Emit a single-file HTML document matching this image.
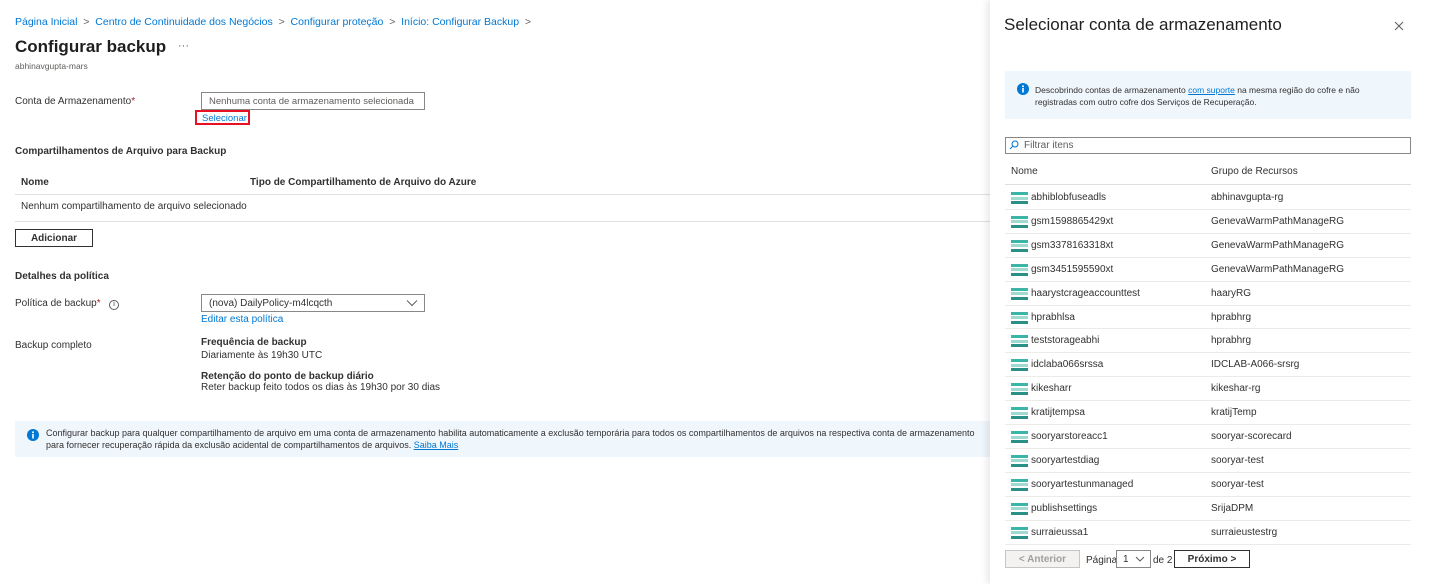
<!DOCTYPE html>
<html><head><meta charset="utf-8"><style>
*{box-sizing:border-box;margin:0;padding:0}
body{width:1429px;height:584px;overflow:hidden;background:#fff;font-family:"Liberation Sans",sans-serif;color:#323130;font-size:10px;position:relative}
.a{position:absolute;white-space:nowrap}
.link{color:#0078d4}
.b{font-weight:bold}
.line{position:absolute;height:1px;background:#e1dfdd}
.ico{position:absolute;width:17px;height:12px;background:#fff}
.ico i{position:absolute;left:0;width:17px;height:3px;background:#3bb5a8}
</style></head><body>
<div class="a link" style="left:15px;top:16px;font-size:10.5px">Página Inicial &nbsp;<span style="color:#605e5c">&gt;</span>&nbsp; Centro de Continuidade dos Negócios &nbsp;<span style="color:#605e5c">&gt;</span>&nbsp; Configurar proteção &nbsp;<span style="color:#605e5c">&gt;</span>&nbsp; Início: Configurar Backup &nbsp;<span style="color:#605e5c">&gt;</span></div>
<div class="a" style="left:15px;top:37px;font-size:17px;font-weight:bold;color:#201f1e">Configurar backup</div>
<div class="a" style="left:178px;top:40px;font-size:11px;color:#605e5c">···</div>
<div class="a" style="left:15px;top:61px;font-size:8.5px;color:#605e5c">abhinavgupta-mars</div>
<div class="a" style="left:15px;top:96px">Conta de Armazenamento<span style="color:#a4262c">*</span></div>
<div class="a" style="left:201px;top:92px;width:224px;height:18px;border:1px solid #8a8886;color:#605e5c;padding:3px 0 0 7px;font-size:9.5px;overflow:hidden">Nenhuma conta de armazenamento selecionada</div>
<div class="a link" style="left:195px;top:110px;width:55px;height:15px;border:2px solid #e81123;padding:1px 0 0 5px;font-size:9.5px">Selecionar</div>
<div class="a b" style="left:15px;top:146px">Compartilhamentos de Arquivo para Backup</div>
<div class="a b" style="left:21px;top:177px;font-weight:bold">Nome</div>
<div class="a b" style="left:250px;top:177px">Tipo de Compartilhamento de Arquivo do Azure</div>
<div class="line" style="left:15px;top:194px;width:975px"></div>
<div class="a" style="left:21px;top:201px">Nenhum compartilhamento de arquivo selecionado</div>
<div class="line" style="left:15px;top:221px;width:975px"></div>
<div class="a b" style="left:15px;top:229px;width:78px;height:18px;border:1px solid #323130;text-align:center;padding-top:3px">Adicionar</div>
<div class="a b" style="left:15px;top:271px">Detalhes da política</div>
<div class="a" style="left:15px;top:298px">Política de backup<span style="color:#a4262c">*</span> &nbsp; <span style="display:inline-block;width:10px;height:10px;border:1px solid #605e5c;border-radius:50%;font-size:7px;text-align:center;line-height:8px">i</span></div>
<div class="a" style="left:201px;top:294px;width:224px;height:18px;border:1px solid #8a8886;padding:3px 0 0 7px">(nova) DailyPolicy-m4lcqcth
<svg style="position:absolute;right:6px;top:4px" width="12" height="8"><path d="M1 1.5l5 5 5-5" fill="none" stroke="#605e5c"/></svg></div>
<div class="a link" style="left:201px;top:314px">Editar esta política</div>
<div class="a" style="left:15px;top:340px">Backup completo</div>
<div class="a b" style="left:201px;top:337px">Frequência de backup</div>
<div class="a" style="left:201px;top:350px">Diariamente às 19h30 UTC</div>
<div class="a b" style="left:201px;top:371px">Retenção do ponto de backup diário</div>
<div class="a" style="left:201px;top:382px">Reter backup feito todos os dias às 19h30 por 30 dias</div>
<div class="a" style="left:15px;top:421px;width:975px;height:36px;background:#eff6fc"></div>
<svg class="a" style="left:27px;top:429px" width="12" height="12"><circle cx="6" cy="6" r="6" fill="#0078d4"/><rect x="5.2" y="5" width="1.6" height="4.5" fill="#fff"/><circle cx="6" cy="3.3" r="1" fill="#fff"/></svg>
<div class="a" style="left:46px;top:427px;font-size:9px;line-height:12px">Configurar backup para qualquer compartilhamento de arquivo em uma conta de armazenamento habilita automaticamente a exclusão temporária para todos os compartilhamentos de arquivos na respectiva conta de armazenamento<br>para fornecer recuperação rápida da exclusão acidental de compartilhamentos de arquivos. <span class="link" style="text-decoration:underline">Saiba Mais</span></div>

<div class="a" style="left:990px;top:0;width:439px;height:584px;background:#fff;box-shadow:-4px 0 6px rgba(0,0,0,0.08)"></div>
<div class="a" style="left:1004px;top:15px;font-size:17px;color:#201f1e">Selecionar conta de armazenamento</div>
<svg class="a" style="left:1394px;top:21px" width="10" height="10"><path d="M1 1l8 8M9 1l-8 8" stroke="#605e5c" stroke-width="1"/></svg>
<div class="a" style="left:1005px;top:71px;width:406px;height:48px;background:#eff6fc"></div>
<svg class="a" style="left:1017px;top:83px" width="12" height="12"><circle cx="6" cy="6" r="6" fill="#0078d4"/><rect x="5.2" y="5" width="1.6" height="4.5" fill="#fff"/><circle cx="6" cy="3.3" r="1" fill="#fff"/></svg>
<div class="a" style="left:1035px;top:84px;font-size:8.5px;line-height:12px">Descobrindo contas de armazenamento <span class="link" style="text-decoration:underline">com suporte</span> na mesma região do cofre e não<br>registradas com outro cofre dos Serviços de Recuperação.</div>
<div class="a" style="left:1005px;top:137px;width:406px;height:17px;border:1px solid #8a8886;padding:2px 0 0 18px;color:#605e5c">Filtrar itens</div>
<svg class="a" style="left:1009px;top:140px" width="10" height="10"><circle cx="6" cy="4" r="3" fill="none" stroke="#0078d4"/><path d="M4 6L1 9" stroke="#0078d4"/></svg>
<div class="a" style="left:1011px;top:166px">Nome</div>
<div class="a" style="left:1211px;top:166px">Grupo de Recursos</div>
<div class="line" style="left:1005px;top:184px;width:406px"></div>
<div id="rows"></div>
<div class="a" style="left:1005px;top:550px;width:75px;height:18px;border:1px solid #c8c6c4;background:#f3f2f1;color:#a19f9d;text-align:center;padding-top:3px;font-weight:bold">&lt; Anterior</div>
<div class="a" style="left:1086px;top:555px">Página</div>
<div class="a" style="left:1116px;top:550px;width:35px;height:18px;border:1px solid #8a8886;padding:3px 0 0 6px">1<svg style="position:absolute;right:5px;top:5px" width="10" height="6"><path d="M1 1l4 4 4-4" fill="none" stroke="#605e5c"/></svg></div>
<div class="a" style="left:1153px;top:555px">de 2</div>
<div class="a b" style="left:1174px;top:550px;width:76px;height:18px;border:1px solid #323130;text-align:center;padding-top:3px">Próximo &gt;</div>
<script>
var d=[["abhiblobfuseadls","abhinavgupta-rg"],["gsm1598865429xt","GenevaWarmPathManageRG"],["gsm3378163318xt","GenevaWarmPathManageRG"],["gsm3451595590xt","GenevaWarmPathManageRG"],["haarystcrageaccounttest","haaryRG"],["hprabhlsa","hprabhrg"],["teststorageabhi","hprabhrg"],["idclaba066srssa","IDCLAB-A066-srsrg"],["kikesharr","kikeshar-rg"],["kratijtempsa","kratijTemp"],["sooryarstoreacc1","sooryar-scorecard"],["sooryartestdiag","sooryar-test"],["sooryartestunmanaged","sooryar-test"],["publishsettings","SrijaDPM"],["surraieussa1","surraieustestrg"]];
var h="";d.forEach(function(r,i){var y=185+i*23.9;
h+='<div class="ico" style="left:1011px;top:'+(y+7)+'px"><i style="top:0"></i><i style="top:4.5px;background:#9fd9d2"></i><i style="top:9px;background:#2a8f86"></i></div>';
h+='<div class="a" style="left:1031px;top:'+(y+7)+'px">'+r[0]+'</div><div class="a" style="left:1211px;top:'+(y+7)+'px">'+r[1]+'</div><div class="line" style="left:1005px;top:'+(y+23.9)+'px;width:406px;background:#edebe9"></div>';});
document.getElementById("rows").innerHTML=h;
</script>
</body></html>
